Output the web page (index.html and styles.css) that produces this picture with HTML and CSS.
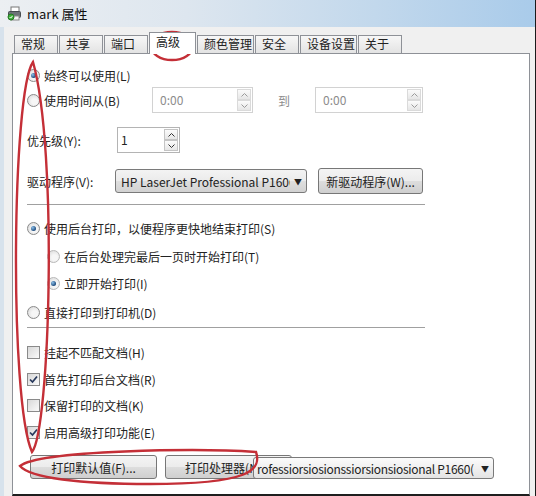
FILE: index.html
```html
<!DOCTYPE html>
<html lang="zh-CN">
<head>
  <meta charset="UTF-8" />
  <meta name="viewport" content="width=device-width, initial-scale=1.0"/>
  <title>mark 属性</title>
  <link rel="stylesheet" href="styles.css">
</head>
<body>
  <div class="window">
    <div class="titlebar">
      <svg class="app-icon" width="15" height="15" viewBox="0 0 15 15">
        <rect x="4" y="1" width="8" height="5" fill="#fff" stroke="#777"/>
        <rect x="1.5" y="5.5" width="12" height="6" rx="1" fill="#6d7378" stroke="#474c50"/>
        <rect x="4" y="10" width="8" height="4" fill="#f4f4f4" stroke="#888"/>
        <circle cx="4" cy="11" r="3" fill="#3fae3a" stroke="#237a22"/>
        <path d="M2.6 11 L3.7 12.1 L5.6 9.8" fill="none" stroke="#fff" stroke-width="1"/>
      </svg>
      <span class="title">mark 属性</span>
    </div>

    <div class="frame">
      <div class="tabs">
        <div class="tab">常规</div>
        <div class="tab">共享</div>
        <div class="tab">端口</div>
        <div class="tab active">高级</div>
        <div class="tab wide">颜色管理</div>
        <div class="tab">安全</div>
        <div class="tab wide">设备设置</div>
        <div class="tab">关于</div>
      </div>

      <div class="panel">
        <div class="row r-always">
          <span class="radio checked"></span>
          <span class="txt">始终可以使用(L)</span>
        </div>

        <div class="row r-time">
          <div class="time-label">
            <span class="radio"></span>
            <span class="txt">使用时间从(B)</span>
          </div>
          <div class="spin disabled spin-from">
            <span class="spin-val">0:00</span>
            <span class="spin-btns">
              <i><svg width="7" height="4" viewBox="0 0 7 4"><path d="M0.5 3.5 L3.5 0.5 L6.5 3.5" fill="none" stroke="#9a9a9a"/></svg></i>
              <i><svg width="7" height="4" viewBox="0 0 7 4"><path d="M0.5 0.5 L3.5 3.5 L6.5 0.5" fill="none" stroke="#9a9a9a"/></svg></i>
            </span>
          </div>
          <span class="to">到</span>
          <div class="spin disabled spin-to">
            <span class="spin-val">0:00</span>
            <span class="spin-btns">
              <i><svg width="7" height="4" viewBox="0 0 7 4"><path d="M0.5 3.5 L3.5 0.5 L6.5 3.5" fill="none" stroke="#9a9a9a"/></svg></i>
              <i><svg width="7" height="4" viewBox="0 0 7 4"><path d="M0.5 0.5 L3.5 3.5 L6.5 0.5" fill="none" stroke="#9a9a9a"/></svg></i>
            </span>
          </div>
        </div>

        <div class="row r-priority">
          <span class="field-label prio-label">优先级(Y):</span>
          <div class="spin spin-prio">
            <span class="spin-val">1</span>
            <span class="spin-btns">
              <i><svg width="7" height="4" viewBox="0 0 7 4"><path d="M0.5 3.5 L3.5 0.5 L6.5 3.5" fill="none" stroke="#333"/></svg></i>
              <i><svg width="7" height="4" viewBox="0 0 7 4"><path d="M0.5 0.5 L3.5 3.5 L6.5 0.5" fill="none" stroke="#333"/></svg></i>
            </span>
          </div>
        </div>

        <div class="row r-driver">
          <span class="field-label driver-label">驱动程序(V):</span>
          <div class="select driver-select">
            <span class="select-text">HP LaserJet Professional P1606dn</span>
            <span class="select-arrow">▼</span>
          </div>
          <button class="btn new-driver">新驱动程序(W)...</button>
        </div>

        <div class="sep sep-1"></div>

        <div class="row opt r-spool">
          <span class="radio checked"></span>
          <span class="txt">使用后台打印，以便程序更快地结束打印(S)</span>
        </div>
        <div class="row opt sub r-last">
          <span class="radio"></span>
          <span class="txt">在后台处理完最后一页时开始打印(T)</span>
        </div>
        <div class="row opt sub r-now">
          <span class="radio checked"></span>
          <span class="txt">立即开始打印(I)</span>
        </div>
        <div class="row opt r-direct">
          <span class="radio"></span>
          <span class="txt">直接打印到打印机(D)</span>
        </div>

        <div class="sep sep-2"></div>

        <div class="row opt r-hold">
          <span class="check"></span>
          <span class="txt">挂起不匹配文档(H)</span>
        </div>
        <div class="row opt r-first">
          <span class="check on"><svg width="11" height="11" viewBox="0 0 11 11"><path d="M2 5.5 L4.5 8 L9 2.5" fill="none" stroke="#27385c" stroke-width="1.7"/></svg></span>
          <span class="txt">首先打印后台文档(R)</span>
        </div>
        <div class="row opt r-keep">
          <span class="check"></span>
          <span class="txt">保留打印的文档(K)</span>
        </div>
        <div class="row opt r-adv">
          <span class="check on"><svg width="11" height="11" viewBox="0 0 11 11"><path d="M2 5.5 L4.5 8 L9 2.5" fill="none" stroke="#27385c" stroke-width="1.7"/></svg></span>
          <span class="txt">启用高级打印功能(E)</span>
        </div>

        <div class="row r-buttons">
          <button class="btn wide-btn">打印默认值(F)...</button>
          <button class="btn wide-btn">打印处理器(N)...</button>
          <div class="select stray-select">
            <span class="select-text">rofessiorsiosionssiorsionsiosional P1660(</span>
            <span class="select-arrow">▼</span>
          </div>
        </div>
      </div>
    </div>

    <!-- red marker annotations drawn over the dialog -->
    <svg class="marks" width="536" height="496" viewBox="0 0 536 496">
      <ellipse cx="172" cy="46" rx="21" ry="14" fill="none" stroke="#c42f37" stroke-width="2.4"/>
      <path d="M33 62 C12 92 9 400 32 452 C50 430 58 150 33 62 Z" fill="none" stroke="#c42f37" stroke-width="2.4"/>
      <path d="M20 466 C40 450 200 448 256 452 C262 470 250 484 150 484 C80 484 30 478 20 466 Z" fill="none" stroke="#c42f37" stroke-width="2.4"/>
    </svg>
  </div>
</body>
</html>
```

FILE: styles.css
```css
body {
  margin: 0;
  font-family: "Noto Sans CJK SC", "Liberation Sans", sans-serif;
  font-size: 12px;
  color: #222;
}

.window {
  position: relative;
  width: 536px;
  height: 496px;
  overflow: hidden;
  background: #f0f0f0;
  display: flex;
  flex-direction: column;
  box-sizing: border-box;
  border-right: 1px solid #1a1a1a;
}

/* title bar */
.titlebar {
  height: 27px;
  flex: none;
  display: flex;
  align-items: center;
  gap: 5px;
  padding-left: 7px;
  background: linear-gradient(90deg, #eceff2 0%, #dde6ef 35%, #c2d8ec 70%, #a9cbea 100%);
}

.title {
  font-size: 13px;
  color: #111;
}

/* tabs + panel */
.frame {
  flex: 1;
  display: flex;
  flex-direction: column;
  padding: 5px 5px 0 12px;
  box-sizing: border-box;
  min-height: 0;
  background: linear-gradient(90deg, #d7e2ec 0, #d7e2ec 4px, #f0f0f0 4px);
}

.tabs {
  display: flex;
  align-items: flex-end;
  gap: 1px;
  padding-left: 2px;
  height: 21px;
  position: relative;
  z-index: 1;
}

.tab {
  box-sizing: border-box;
  width: 44px;
  height: 18px;
  line-height: 16px;
  padding-left: 6px;
  border: 1px solid #8e9197;
  border-bottom: none;
  background: linear-gradient(#f7f7f7, #e3e3e3);
  color: #222;
  white-space: nowrap;
}

.tab.wide {
  width: 57px;
}

.tab.active {
  width: 47px;
  height: 22px;
  line-height: 18px;
  background: #fff;
  margin-bottom: -1px;
}

.panel {
  flex: 1;
  display: flex;
  flex-direction: column;
  background: #fff;
  border: 1px solid #8e9197;
  border-bottom: 2px solid #1e1e1e;
  padding: 11px 0 0 14px;
  min-height: 0;
}

.row {
  display: flex;
  align-items: center;
  flex: none;
}

.txt {
  margin-left: 4px;
  white-space: nowrap;
}

.r-always { height: 20px; }
.r-time { height: 26px; margin-top: 2px; }
.r-priority { height: 26px; margin-top: 14px; }
.r-driver { height: 26px; margin-top: 15px; }

.opt { height: 20px; margin-top: 7px; }
.opt.sub { padding-left: 20px; }
.r-spool { margin-top: 12px; }
.r-last { margin-top: 8px; }
.r-direct { margin-top: 9px; }
.r-hold { margin-top: 13px; }
.r-keep { margin-top: 6px; }

.sep {
  width: 398px;
  height: 0;
  border-top: 1px solid #a0a0a0;
  border-bottom: 1px solid #fff;
  flex: none;
}

.sep-1 { margin-top: 10px; }
.sep-2 { margin-top: 5px; }

/* radio buttons and check boxes */
.radio {
  position: relative;
  flex: none;
  box-sizing: border-box;
  width: 13px;
  height: 13px;
  border-radius: 50%;
  border: 1px solid #8a8a8a;
  background: radial-gradient(circle at 60% 60%, #f6f6f6 30%, #d4d4d4 100%);
}

.radio.checked::after {
  content: "";
  position: absolute;
  left: 3px;
  top: 3px;
  width: 5px;
  height: 5px;
  border-radius: 50%;
  background: radial-gradient(circle at 35% 35%, #8cc0ea, #1d4a7c 70%);
}

.sub .radio {
  border-color: #b8b8b8;
}

.check {
  flex: none;
  box-sizing: border-box;
  width: 13px;
  height: 13px;
  border: 1px solid #8a8a8a;
  background: linear-gradient(135deg, #d8d8d8, #fafafa);
  display: flex;
  align-items: center;
  justify-content: center;
}

/* time + priority spinners */
.time-label {
  display: flex;
  align-items: center;
  width: 125px;
}

.spin {
  display: flex;
  box-sizing: border-box;
  height: 26px;
  border: 1px solid #b4b4b4;
  background: #fff;
}

.spin.disabled {
  border-color: #d2d2d2;
  color: #8c8c8c;
}

.spin-from { width: 101px; }
.spin-to { width: 108px; }
.spin-prio { width: 63px; }

.spin-val {
  flex: 1;
  padding-left: 7px;
  line-height: 24px;
}

.spin-prio .spin-val {
  padding-left: 3px;
}

.spin-btns {
  display: flex;
  flex-direction: column;
  width: 14px;
  padding: 1px 1px 1px 0;
}

.spin-btns i {
  flex: 1;
  display: flex;
  align-items: center;
  justify-content: center;
  border: 1px solid #c4c4c4;
  background: linear-gradient(#fbfbfb, #e6e6e6);
}

.spin.disabled .spin-btns i {
  border-color: #dadada;
}

.to {
  margin: 0 25px;
  color: #8c8c8c;
}

.field-label {
  white-space: nowrap;
}

.prio-label { width: 90px; }
.driver-label { width: 88px; }

/* combo boxes and buttons */
.select {
  display: flex;
  align-items: center;
  box-sizing: border-box;
  border: 1px solid #7a7a7a;
  border-radius: 3px;
  background: linear-gradient(#f3f3f3, #ebebeb 48%, #dedede 52%, #d2d2d2);
  overflow: hidden;
  white-space: nowrap;
}

.select-text {
  flex: 1;
  overflow: hidden;
  padding-left: 5px;
}

.select-arrow {
  flex: none;
  width: 16px;
  font-size: 8px;
  color: #222;
  text-align: center;
}

.driver-select {
  width: 192px;
  height: 24px;
}

.btn {
  box-sizing: border-box;
  font-family: inherit;
  font-size: 12px;
  color: #222;
  border: 1px solid #777;
  border-radius: 3px;
  background: linear-gradient(#f4f4f4, #ececec 48%, #dddddd 52%, #cfcfcf);
  padding: 0;
}

.new-driver {
  width: 105px;
  height: 26px;
  margin-left: 11px;
}

.r-buttons {
  position: relative;
  height: 24px;
  margin-top: 13px;
  padding-left: 3px;
  gap: 8px;
}

.wide-btn {
  width: 127px;
  height: 24px;
}

.stray-select {
  position: absolute;
  left: 226px;
  top: 2px;
  width: 241px;
  height: 22px;
  background: linear-gradient(#fbfbfb, #f0f0f0 50%, #e4e4e4);
}

.stray-select .select-text {
  padding-left: 3px;
  letter-spacing: -0.3px;
}

/* annotations */
.marks {
  position: absolute;
  left: 0;
  top: 0;
  pointer-events: none;
}
```
